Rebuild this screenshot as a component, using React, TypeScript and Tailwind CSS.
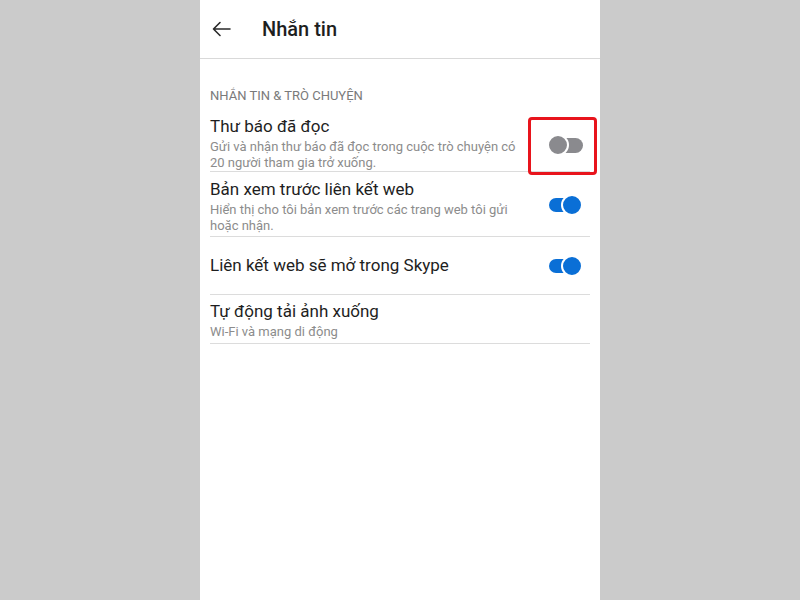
import React from "react";

const font = { fontFamily: 'Roboto, "Noto Sans", sans-serif' };

function Toggle({ on }: { on: boolean }) {
  return (
    <div className="relative h-[22px] w-[36px] shrink-0">
      {on ? (
        <>
          <div className="absolute left-[2px] top-[4px] h-[14px] w-[24px] rounded-l-full bg-[#0a6fd6]" />
          <div className="absolute right-0 top-0 h-[22px] w-[22px] rounded-full border-2 border-white bg-[#0a6fd6]" />
        </>
      ) : (
        <>
          <div className="absolute right-0 top-[4px] h-[15px] w-[24px] rounded-r-full bg-[#8a8a8e]" />
          <div className="absolute left-0 top-0 h-[22px] w-[22px] rounded-full border-2 border-white bg-[#8a8a8e]" />
        </>
      )}
    </div>
  );
}

function Row({
  title,
  lines,
  toggle,
  height,
  toggleOffset = "",
  highlight,
}: {
  title: string;
  lines?: string[];
  toggle?: boolean;
  height: string;
  toggleOffset?: string;
  highlight?: boolean;
}) {
  return (
    <div className={`flex items-center border-b border-[#dcdcdc] ${height}`}>
      <div className="flex min-w-0 flex-1 flex-col">
        <div className="text-[17px] leading-[21px] text-[#1e1e1e]">{title}</div>
        {lines && (
          <div className="mt-[2px] flex flex-col">
            {lines.map((l) => (
              <div key={l} className="whitespace-nowrap text-[13px] leading-[16px] text-[#8c8c8c]">
                {l}
              </div>
            ))}
          </div>
        )}
      </div>
      {toggle !== undefined && (
        <div className={`relative mr-[7px] ${toggleOffset}`}>
          <Toggle on={toggle} />
          {highlight && (
            <div className="pointer-events-none absolute -bottom-[19px] -left-[19px] -right-[14px] -top-[17px] rounded-[4px] border-[3px] border-[#e8141c]" />
          )}
        </div>
      )}
    </div>
  );
}

export default function App() {
  return (
    <div className="flex h-[600px] w-[800px] justify-center bg-[#cbcbcb]" style={font}>
      <div className="flex w-[400px] flex-col bg-white">
        <header className="flex h-[59px] items-center border-b border-[#d9d9d9]">
          <svg
            className="ml-[12px]"
            width="19"
            height="16"
            viewBox="0 0 19 16"
            fill="none"
            stroke="#2a2a2a"
            strokeWidth="1.6"
            strokeLinecap="round"
            strokeLinejoin="round"
          >
            <path d="M18 8H1.5M8 1.5 1.5 8 8 14.5" />
          </svg>
          <h1 className="ml-[31px] text-[20px] font-medium leading-none text-[#1e1e1e]">Nhắn tin</h1>
        </header>
        <div className="flex flex-col px-[10px]">
          <div className="mt-[29px] text-[13px] leading-[16px] text-[#7a7a7a]">
            NHẮN TIN &amp; TRÒ CHUYỆN
          </div>
          <Row
            height="h-[63px] mt-[5px] pt-[6px]"
            title="Thư báo đã đọc"
            lines={["Gửi và nhận thư báo đã đọc trong cuộc trò chuyện có", "20 người tham gia trở xuống."]}
            toggle={false}
            toggleOffset="mt-[4px]"
            highlight
          />
          <Row
            height="h-[65px] pt-[4px]"
            title="Bản xem trước liên kết web"
            lines={["Hiển thị cho tôi bản xem trước các trang web tôi gửi", "hoặc nhận."]}
            toggle={true}
            toggleOffset="-mt-[2px]"
          />
          <Row height="h-[58px]" title="Liên kết web sẽ mở trong Skype" toggle={true} />
          <Row height="h-[49px] pt-[2px]" title="Tự động tải ảnh xuống" lines={["Wi-Fi và mạng di động"]} />
        </div>
      </div>
    </div>
  );
}
